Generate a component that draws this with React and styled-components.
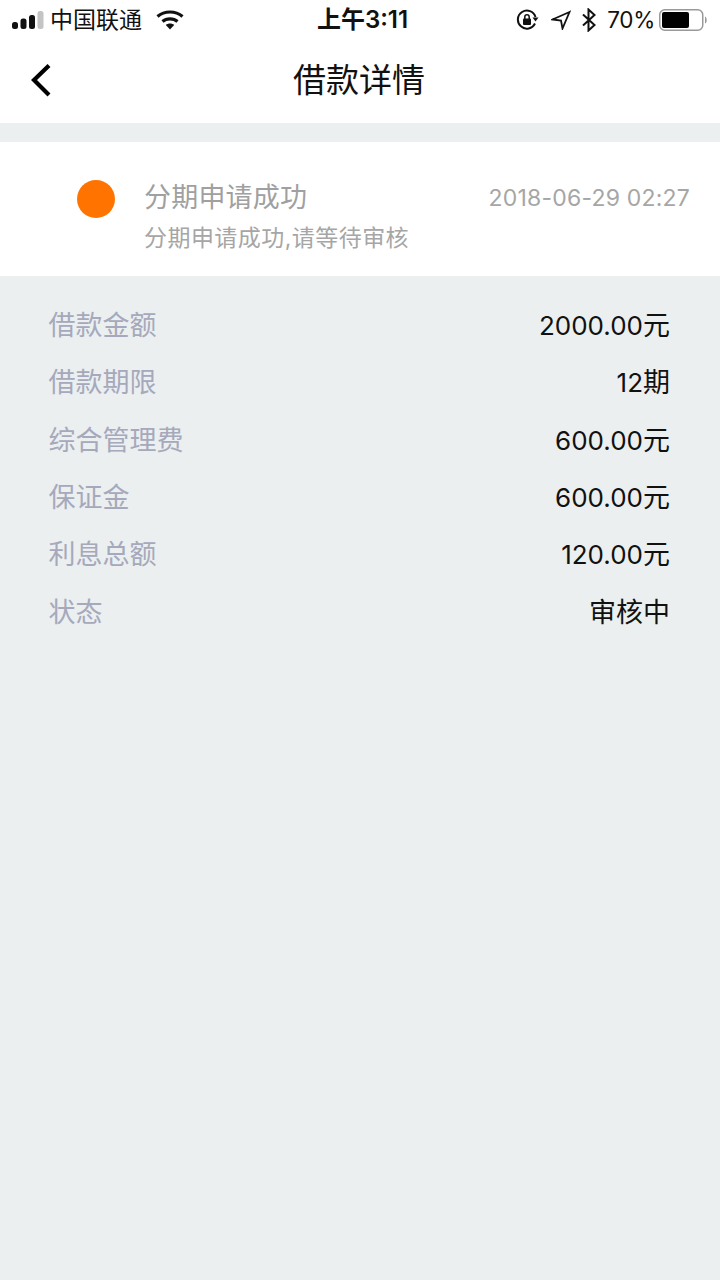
import React from 'react';
import styled, { createGlobalStyle } from 'styled-components';

const Global = createGlobalStyle`
  html, body { margin: 0; padding: 0; background: #ebeff0; }
  * { box-sizing: border-box; }
`;
const FONT = `Inter, "Noto Sans CJK SC", sans-serif`;
const Page = styled.div`
  width: 720px; height: 1280px; background: #ebeff0; overflow: hidden;
  font-family: ${FONT}; display: flex; flex-direction: column;
`;
const Header = styled.header`background: #fff; height: 123px; display: flex; flex-direction: column;`;
const StatusBar = styled.div`
  height: 40px; display: flex; align-items: center; justify-content: space-between;
  color: #111; font-size: 23px; position: relative; padding: 0 12px;
`;
const StatusSide = styled.div`display: flex; align-items: center;`;
const Clock = styled.div`
  position: absolute; left: 5px; right: 0; top: 5px; text-align: center; font-weight: 600; font-size: 24px; line-height: 30px;
`;
const Carrier = styled.span`margin-left: 6px; margin-right: 14px; font-size: 23px; line-height: 30px;`;
const Percent = styled.span`font-size: 22.5px; letter-spacing: -0.3px; margin: 0 4px 0 10px; line-height: 30px;`;
const StatusIcon = styled.svg`margin-left: ${p => p.$gap || 0}px; flex: none;`;
const NavBar = styled.div`
  flex: 1; display: flex; align-items: center; justify-content: center; position: relative; padding: 0 2px 3px 0;
`;
const BackIcon = styled.svg`position: absolute; left: 28px; top: 21px;`;
const Title = styled.h1`margin: 0; font-size: 33px; font-weight: 400; color: #111; line-height: 44px;`;
const Card = styled.section`
  margin-top: 19px; height: 134px; background: #fff; display: flex; align-items: flex-start; padding: 38px 30px 0 77px;
`;
const Dot = styled.div`width: 38px; height: 38px; border-radius: 50%; background: #ff7300; flex: none;`;
const CardBody = styled.div`flex: 1; margin-left: 29px; min-width: 0;`;
const CardTop = styled.div`display: flex; justify-content: space-between; align-items: center; height: 36px;`;
const CardTitle = styled.div`font-size: 27px; letter-spacing: 0.2px; color: #a0a0a0; line-height: 36px;`;
const CardTime = styled.div`font-size: 23px; color: #a6a6a6; letter-spacing: 0.2px; line-height: 36px;`;
const CardSub = styled.div`font-size: 23px; letter-spacing: 0.45px; color: #a6a6a6; line-height: 32px; margin-top: 6px;`;
const Rows = styled.dl`margin: 18.6px 0 0; padding: 0 50px 0 48.5px; display: flex; flex-direction: column;`;
const Row = styled.div`height: 57.4px; display: flex; justify-content: space-between; align-items: center;`;
const Label = styled.dt`font-size: 27px; color: #a6a9bb;`;
const Value = styled.dd`margin: 0; font-size: 27px; color: #111;`;
const Num = styled.span`font-size: 26px;`;

const rows = [
  ['借款金额', '2000.00', '元'], ['借款期限', '12', '期'], ['综合管理费', '600.00', '元'],
  ['保证金', '600.00', '元'], ['利息总额', '120.00', '元'], ['状态', '', '审核中'],
];

export default function App() {
  return (
    <Page>
      <Global />
      <Header>
        <StatusBar>
          <StatusSide>
            <StatusIcon width="32" height="18" viewBox="0 0 32 18">
              <rect x="0" y="11" width="6" height="7" rx="2.5" fill="#111" />
              <rect x="8.5" y="7.5" width="6" height="10.5" rx="2.5" fill="#111" />
              <rect x="17" y="4" width="6" height="14" rx="2.5" fill="#111" />
              <rect x="25.5" y="0" width="6" height="18" rx="2.5" fill="#c4c4c4" />
            </StatusIcon>
            <Carrier>中国联通</Carrier>
            <StatusIcon width="28" height="20" viewBox="0 0 28 20">
              <path d="M1.5 6.5C8.5 0.5 19.5 0.5 26.5 6.5" fill="none" stroke="#111" strokeWidth="3.2" />
              <path d="M6.5 11.5C10.5 8 17.5 8 21.5 11.5" fill="none" stroke="#111" strokeWidth="3.2" />
              <path d="M9.8 15C12 13 16 13 18.2 15L14 19.6Z" fill="#111" />
            </StatusIcon>
          </StatusSide>
          <Clock>上午3:11</Clock>
          <StatusSide>
            <StatusIcon width="24" height="22" viewBox="0 0 24 22">
              <path d="M19 14.5A9 9 0 1 1 19.5 8" fill="none" stroke="#111" strokeWidth="2" />
              <path d="M16.5 8.5h6l-3 4Z" fill="#111" />
              <rect x="7" y="9.5" width="8" height="6.5" rx="1" fill="#111" />
              <path d="M8.8 10V8a2.2 2.2 0 0 1 4.4 0v2" fill="none" stroke="#111" strokeWidth="1.5" />
            </StatusIcon>
            <StatusIcon $gap={11} width="20" height="20" viewBox="0 0 20 20">
              <path d="M18.5 2 L1.5 9.5 L10 10.5 L11.5 18.5 Z" fill="none" stroke="#111" strokeWidth="1.8" />
            </StatusIcon>
            <StatusIcon $gap={10} width="16" height="24" viewBox="0 0 16 24">
              <path d="M2 6.5L13.5 17L7.5 22.5V1.5L13.5 7L2 17.5" fill="none" stroke="#111" strokeWidth="2" />
            </StatusIcon>
            <Percent>70%</Percent>
            <StatusIcon width="49" height="22" viewBox="0 0 49 22">
              <rect x="0.75" y="0.75" width="43" height="20.5" rx="5" fill="none" stroke="#999" strokeWidth="1.5" />
              <rect x="3" y="3" width="27" height="16" rx="2" fill="#000" />
              <path d="M46 7.5c2 .5 2.5 6.5 0 7Z" fill="#999" />
            </StatusIcon>
          </StatusSide>
        </StatusBar>
        <NavBar>
          <BackIcon width="26" height="38" viewBox="0 0 26 38">
            <path d="M21 4.5L6 19L21 34" fill="none" stroke="#000" strokeWidth="4.2" />
          </BackIcon>
          <Title>借款详情</Title>
        </NavBar>
      </Header>
      <Card>
        <Dot />
        <CardBody>
          <CardTop>
            <CardTitle>分期申请成功</CardTitle>
            <CardTime>2018-06-29 02:27</CardTime>
          </CardTop>
          <CardSub>分期申请成功,请等待审核</CardSub>
        </CardBody>
      </Card>
      <Rows>
        {rows.map(([l, n, u]) => (
          <Row key={l}><Label>{l}</Label><Value>{n && <Num>{n}</Num>}{u}</Value></Row>
        ))}
      </Rows>
    </Page>
  );
}
